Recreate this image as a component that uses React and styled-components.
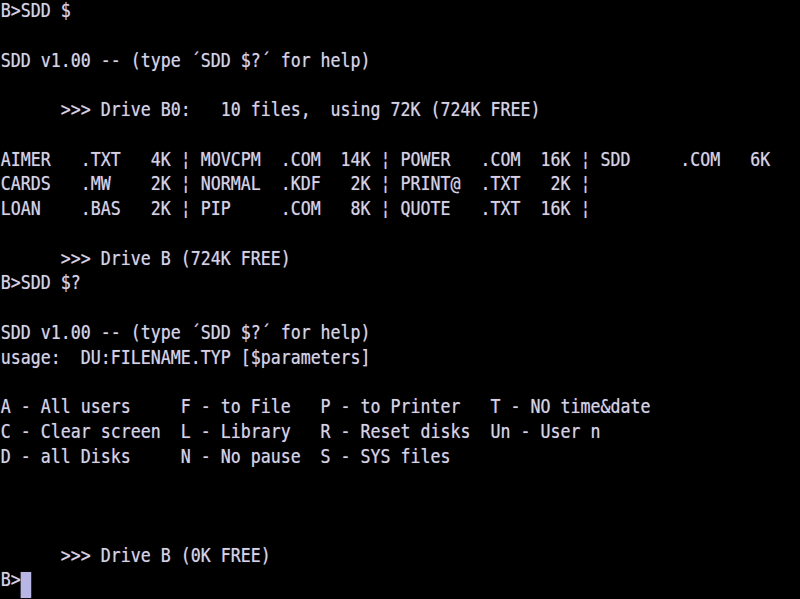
import React from "react";
import styled, { createGlobalStyle } from "styled-components";

const Global = createGlobalStyle`
  html, body {
    margin: 0;
    padding: 0;
    background: #000;
    width: 800px;
    height: 599px;
    overflow: hidden;
  }
`;

const Screen = styled.div`
  width: 800px;
  height: 599px;
  background: #000;
  overflow: hidden;
`;

const Text = styled.div`
  width: 925px;
  margin-top: -1px;
  padding-left: 1px;
  transform: scaleX(0.865);
  transform-origin: 0 0;
  font-family: "DejaVu Sans Mono", "Liberation Mono", monospace;
  font-size: 19.2px;
  color: #d6d2e6;
  text-shadow: 0 0 1px rgba(214, 210, 236, 0.55);
`;

const Line = styled.div`
  height: 24.75px;
  line-height: 24.75px;
  white-space: pre;
`;

const Cursor = styled.span`
  display: inline-block;
  width: 1ch;
  height: 26px;
  vertical-align: top;
  position: relative;
  top: 4px;
  background: #b8b6e4;
  box-shadow: 0 0 1px rgba(184, 182, 228, 0.6);
`;

const lines = [
  "B>SDD $",
  "",
  "SDD v1.00 -- (type ´SDD $?´ for help)",
  "",
  "      >>> Drive B0:   10 files,  using 72K (724K FREE)",
  "",
  "AIMER   .TXT   4K ¦ MOVCPM  .COM  14K ¦ POWER   .COM  16K ¦ SDD     .COM   6K",
  "CARDS   .MW    2K ¦ NORMAL  .KDF   2K ¦ PRINT@  .TXT   2K ¦",
  "LOAN    .BAS   2K ¦ PIP     .COM   8K ¦ QUOTE   .TXT  16K ¦",
  "",
  "      >>> Drive B (724K FREE)",
  "B>SDD $?",
  "",
  "SDD v1.00 -- (type ´SDD $?´ for help)",
  "usage:  DU:FILENAME.TYP [$parameters]",
  "",
  "A - All users     F - to File   P - to Printer   T - NO time&date",
  "C - Clear screen  L - Library   R - Reset disks  Un - User n",
  "D - all Disks     N - No pause  S - SYS files",
  "",
  "",
  "",
  "      >>> Drive B (0K FREE)",
];

export default function App() {
  return (
    <Screen>
      <Global />
      <Text>
        {lines.map((l, i) => (
          <Line key={i}>{l}</Line>
        ))}
        <Line>
          B&gt;<Cursor />
        </Line>
      </Text>
    </Screen>
  );
}
